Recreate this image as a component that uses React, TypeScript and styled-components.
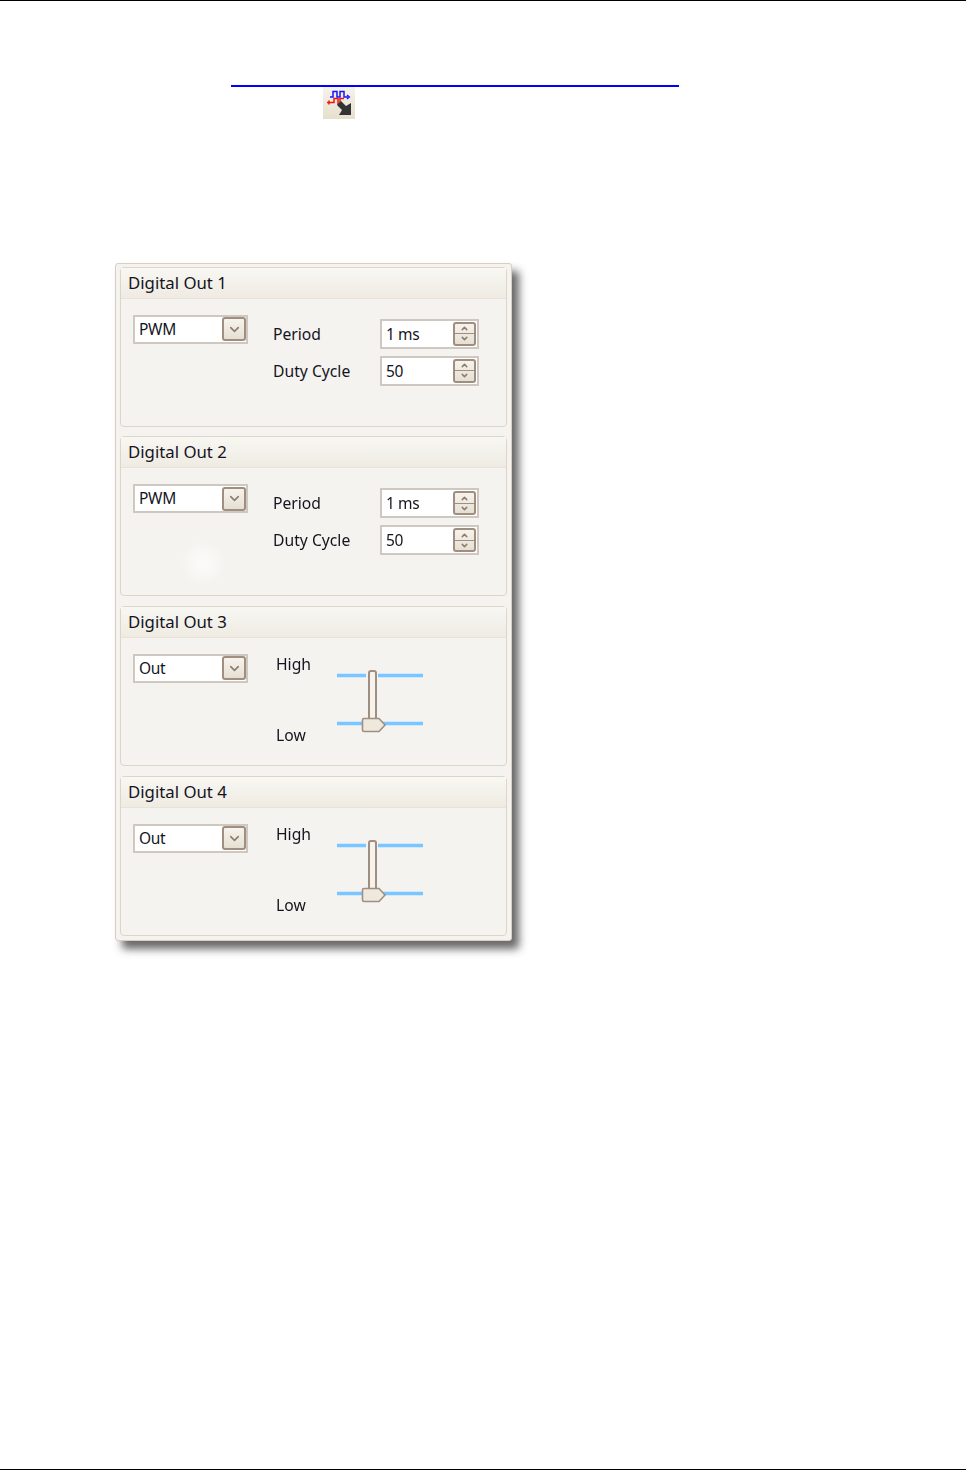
import React from "react";
import styled, { createGlobalStyle } from "styled-components";
import { ChevronDown, ChevronUp } from "lucide-react";

const GlobalStyle = createGlobalStyle`
  html, body {
    margin: 0;
    padding: 0;
    background: #fff;
  }
  body {
    font-family: "Noto Sans", "Open Sans", sans-serif;
    color: #14141e;
  }
`;

const Page = styled.div`
  display: flex;
  flex-direction: column;
  height: 1471px;
  box-sizing: border-box;
  border-top: 1px solid #000;
  overflow: hidden;
`;

const LinkRule = styled.div`
  width: 448px;
  height: 2px;
  margin: 84px 0 0 231px;
  background: #0000ff;
`;

const ToolIcon = styled.svg`
  display: block;
  width: 32px;
  height: 32px;
  margin-left: 323px;
  filter: blur(0.4px);
`;

const Window = styled.div`
  box-sizing: border-box;
  width: 397px;
  margin: 144px 0 0 115px;
  padding: 2.6px 4px 4px;
  display: flex;
  flex-direction: column;
  gap: 9.67px;
  background: #f5f3ef;
  border: 1px solid #d8cfc0;
  border-radius: 3px;
  box-shadow: 7px 8px 8px rgba(40, 40, 40, 0.7);
  filter: blur(0.45px);
`;

const Panel = styled.section<{ $glow?: boolean }>`
  box-sizing: border-box;
  position: relative;
  height: 160px;
  background: #f5f3ef;
  border: 1px solid #ddd5c8;
  border-radius: 4px;

  ${(p) =>
    p.$glow &&
    `&::after {
      content: "";
      position: absolute;
      left: 59px;
      top: 103px;
      width: 46px;
      height: 46px;
      border-radius: 50%;
      background: radial-gradient(circle, #fbfaf8 15%, rgba(251, 250, 248, 0) 70%);
    }`}
`;

const PanelHeader = styled.header`
  box-sizing: border-box;
  height: 31px;
  padding: 0 0 1px 7px;
  display: flex;
  align-items: center;
  font-size: 16.8px;
  background: linear-gradient(#f8f7f3, #efebe3);
  border-bottom: 1px solid #e8e2d8;
`;

const PanelBody = styled.div`
  display: flex;
  padding: 16px 0 0 12px;
`;

const Select = styled.div`
  box-sizing: border-box;
  width: 115px;
  height: 29px;
  padding: 0 0 0 4px;
  display: flex;
  align-items: center;
  justify-content: space-between;
  flex: none;
  font-size: 15.5px;
  letter-spacing: -0.3px;
  background: #fff;
  border: 2px solid #cfc8c0;
`;

const SelectText = styled.span`
  margin-top: -1px;
`;

const DropButton = styled.div`
  box-sizing: border-box;
  width: 24px;
  height: 24px;
  display: flex;
  align-items: center;
  justify-content: center;
  color: #8d7b6b;
  background: linear-gradient(#f6f3ed, #e6e0d3);
  border: 2px solid #a08f80;
  border-radius: 3px;
`;

const FieldGrid = styled.div`
  margin: 4px 0 0 25px;
  display: grid;
  grid-template-columns: 107px 99px;
  row-gap: 7px;
  align-items: center;
`;

const Label = styled.span`
  font-size: 15.7px;
`;

const NumberField = styled.div`
  box-sizing: border-box;
  height: 30px;
  padding-left: 4px;
  display: flex;
  align-items: center;
  justify-content: space-between;
  font-size: 15.5px;
  letter-spacing: -0.4px;
  background: #fff;
  border: 2px solid #cfc8c0;
`;

const Spinner = styled.div`
  box-sizing: border-box;
  width: 23px;
  height: 24px;
  margin-right: 1px;
  display: flex;
  flex-direction: column;
  color: #8d7b6b;
  background: linear-gradient(#f6f3ed, #e6e0d3);
  border: 2px solid #a08f80;
  border-radius: 3px;
`;

const SpinStep = styled.div`
  flex: 1;
  min-height: 0;
  display: flex;
  align-items: center;
  justify-content: center;
  & + & {
    border-top: 1px solid #a08f80;
  }
`;

const LevelColumn = styled.div`
  height: 93px;
  margin: -1px 0 0 28px;
  width: 61px;
  display: flex;
  flex-direction: column;
  justify-content: space-between;
`;

const Slider = styled.svg`
  display: block;
  width: 88px;
  height: 66px;
  margin-top: 16px;
  flex: none;
`;

const BottomRule = styled.div`
  height: 1px;
  margin-top: auto;
  margin-bottom: 1px;
  background: #000;
`;

const SpinBox = ({ value }: { value: string }) => (
  <NumberField>
    {value}
    <Spinner>
      <SpinStep>
        <ChevronUp size={9} strokeWidth={4} />
      </SpinStep>
      <SpinStep>
        <ChevronDown size={9} strokeWidth={4} />
      </SpinStep>
    </Spinner>
  </NumberField>
);

const ModeSelect = ({ value }: { value: string }) => (
  <Select>
    <SelectText>{value}</SelectText>
    <DropButton>
      <ChevronDown size={15} strokeWidth={2.5} />
    </DropButton>
  </Select>
);

const LevelSlider = () => (
  <Slider viewBox="0 0 88 66">
    <rect x="0" y="3" width="86" height="5" fill="#cfeaff" />
    <rect x="0" y="4" width="86" height="3" fill="#7cc6ff" />
    <rect x="0" y="51" width="86" height="5" fill="#cfeaff" />
    <rect x="0" y="52" width="86" height="3" fill="#7cc6ff" />
    <rect x="29" y="2" width="12" height="50" fill="#f5f3ef" />
    <rect x="32" y="1" width="7" height="50" rx="2" fill="#f6f3ed" stroke="#a08f80" strokeWidth="2" />
    <path
      d="M27 48.500h15l6 6.500-6 6.500H27q-1.500 0-1.500-1.500v-10q0-1.500 1.500-1.500z"
      fill="#efe9dd"
      stroke="#a08f80"
      strokeWidth="1.600"
    />
  </Slider>
);

const channels = [
  { title: "Digital Out 1", mode: "PWM" },
  { title: "Digital Out 2", mode: "PWM", glow: true },
  { title: "Digital Out 3", mode: "Out" },
  { title: "Digital Out 4", mode: "Out" },
];

const App = () => (
  <Page>
    <GlobalStyle />
    <LinkRule />
    <ToolIcon viewBox="0 0 32 32">
      <defs>
        <linearGradient id="iconBg" x1="0" y1="0" x2="0" y2="1">
          <stop offset="0" stopColor="#f6f3ea" />
          <stop offset="1" stopColor="#e6dfcd" />
        </linearGradient>
      </defs>
      <rect width="32" height="32" fill="url(#iconBg)" />
      <path d="M7 10h3V4.500h4V10h3V4.500h4V10h4" fill="none" stroke="#1414ff" strokeWidth="1.500" />
      <path d="M24 8l2.500 2-2.500 2" fill="none" stroke="#1414ff" strokeWidth="1.200" />
      <path d="M4 15.500h7V11.500h4V17h2V11.500h4" fill="none" stroke="#f01414" strokeWidth="1.500" />
      <path d="M6 13.500v4" stroke="#f01414" strokeWidth="1.500" />
      <path d="M14 18l4-4 5 5 5-3v12H16l3-5z" fill="#333" />
    </ToolIcon>
    <Window>
      {channels.map((ch) => (
        <Panel key={ch.title} $glow={ch.glow}>
          <PanelHeader>{ch.title}</PanelHeader>
          <PanelBody>
            <ModeSelect value={ch.mode} />
            {ch.mode === "PWM" ? (
              <FieldGrid>
                <Label>Period</Label>
                <SpinBox value="1 ms" />
                <Label>Duty Cycle</Label>
                <SpinBox value="50" />
              </FieldGrid>
            ) : (
              <>
                <LevelColumn>
                  <Label>High</Label>
                  <Label>Low</Label>
                </LevelColumn>
                <LevelSlider />
              </>
            )}
          </PanelBody>
        </Panel>
      ))}
    </Window>
    <BottomRule />
  </Page>
);

export default App;
